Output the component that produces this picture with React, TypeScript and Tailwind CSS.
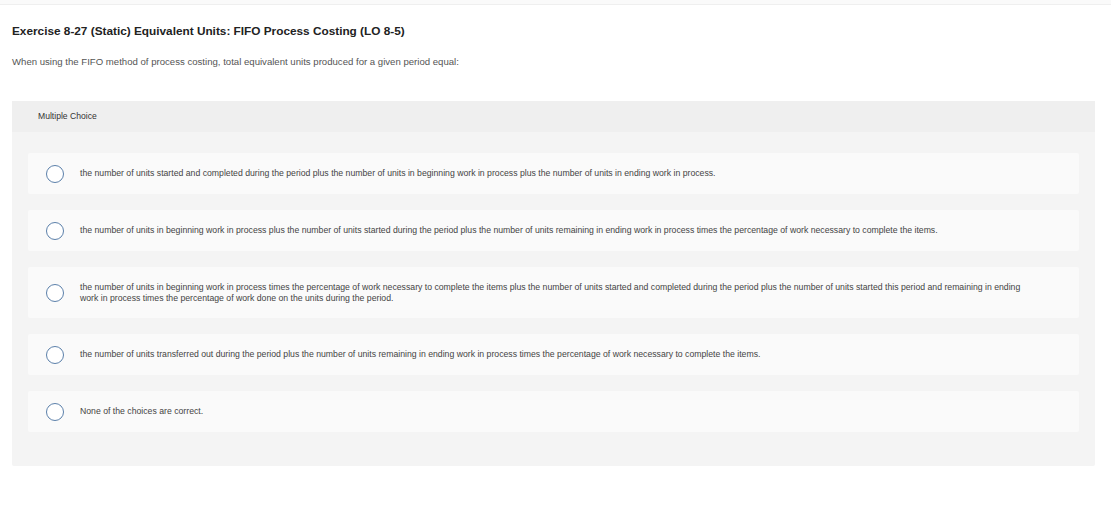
import React from "react";

const options = [
  "the number of units started and completed during the period plus the number of units in beginning work in process plus the number of units in ending work in process.",
  "the number of units in beginning work in process plus the number of units started during the period plus the number of units remaining in ending work in process times the percentage of work necessary to complete the items.",
  "the number of units in beginning work in process times the percentage of work necessary to complete the items plus the number of units started and completed during the period plus the number of units started this period and remaining in ending work in process times the percentage of work done on the units during the period.",
  "the number of units transferred out during the period plus the number of units remaining in ending work in process times the percentage of work necessary to complete the items.",
  "None of the choices are correct.",
];

export default function App() {
  return (
    <div className="w-[1111px] h-[506px] bg-white font-['Liberation_Sans',Arial,sans-serif] text-[#333]">
      <div className="h-[5px] bg-[#fafafa] border-b border-[#efefef]" />
      <div className="pl-[12px] pr-[16px]">
        <h1 className="pt-[19px] text-[11.8px] font-bold text-[#222] leading-[15px]">
          Exercise 8-27 (Static) Equivalent Units: FIFO Process Costing (LO 8-5)
        </h1>
        <p className="mt-[17px] text-[9.6px] text-[#555] leading-[12px]">
          When using the FIFO method of process costing, total equivalent units produced for a given period equal:
        </p>
        <div className="mt-[33px] w-[1083px] bg-[#f4f4f4] rounded-[2px]">
          <div className="h-[31px] bg-[#efefef] flex items-center pl-[26px] text-[8.6px] text-[#333]">
            Multiple Choice
          </div>
          <div className="px-[16px] pt-[21px] pb-[34px] flex flex-col gap-[16px]">
            {options.map((o, i) => (
              <div
                key={i}
                className={`bg-[#fafafa] rounded-[2px] flex items-center ${i === 2 ? "min-h-[51px]" : "min-h-[41px]"}`}
              >
                <div className="w-[52px] flex justify-center shrink-0 pl-[1px]">
                  <div className="w-[18px] h-[18px] rounded-full border-[1.5px] border-[#5b80aa] bg-white" />
                </div>
                <div className="text-[8.7px] leading-[11px] text-[#444] pr-[40px]">{o}</div>
              </div>
            ))}
          </div>
        </div>
      </div>
    </div>
  );
}
